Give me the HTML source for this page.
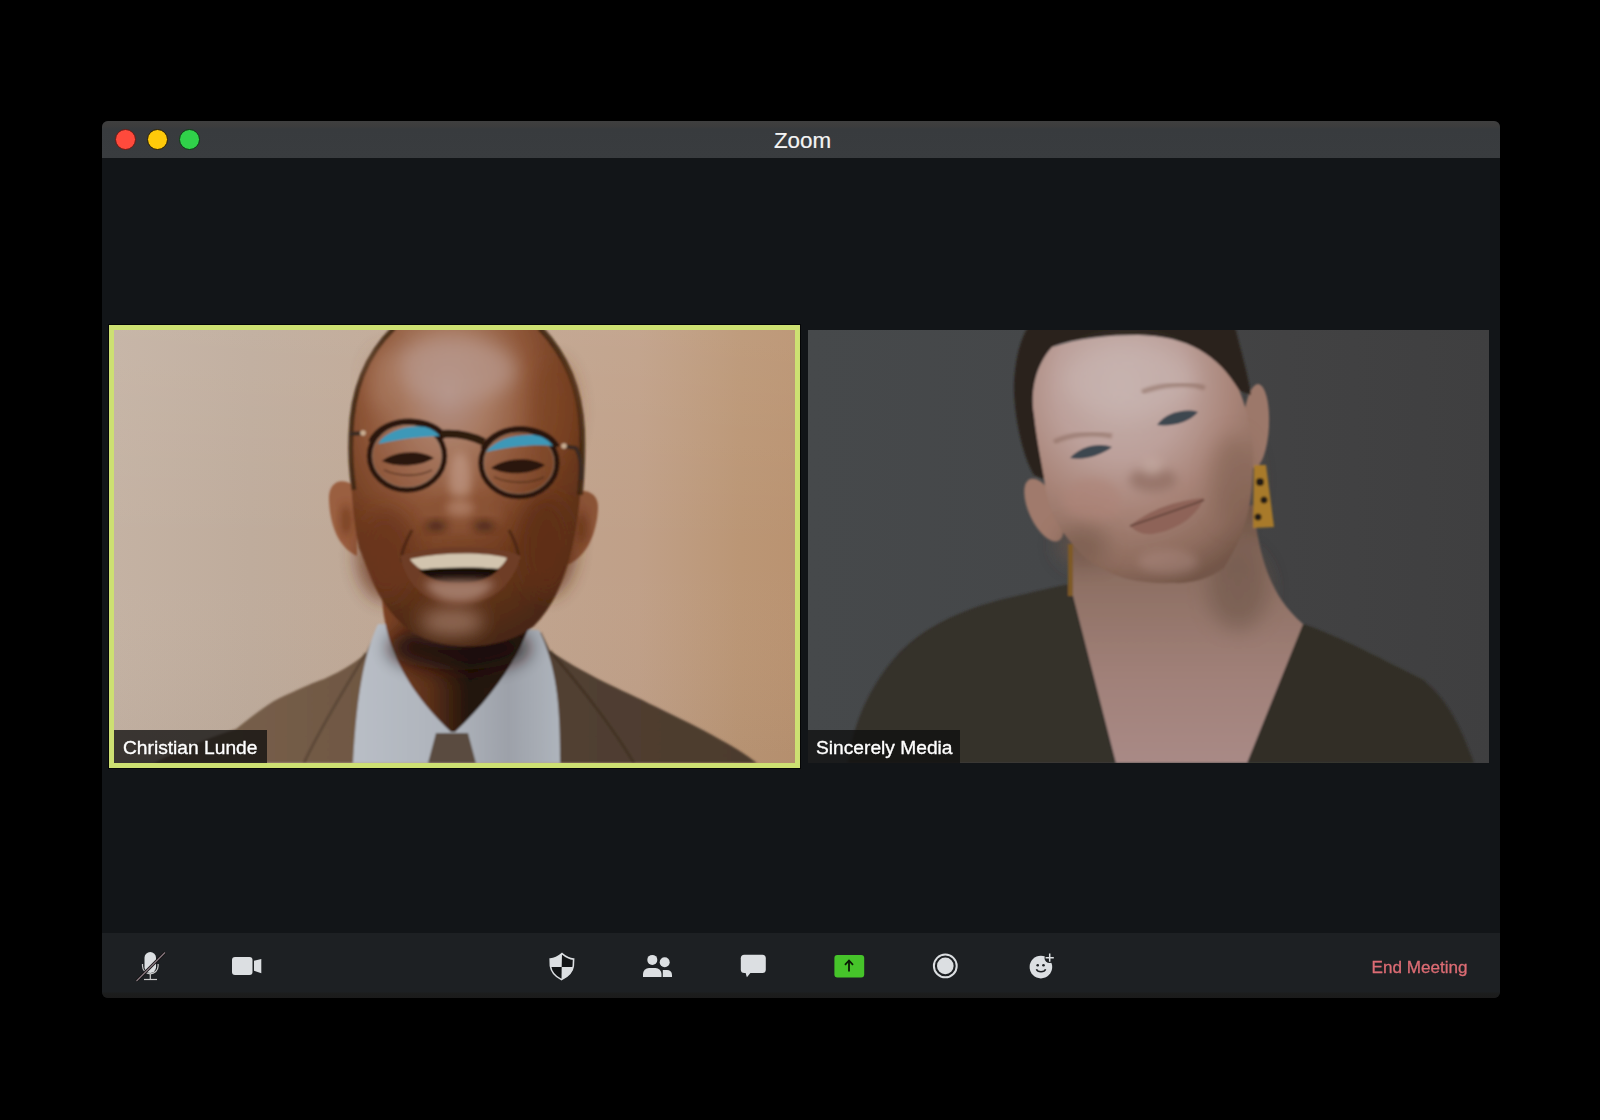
<!DOCTYPE html>
<html><head><meta charset="utf-8">
<style>
html,body{margin:0;padding:0;}
body{width:1600px;height:1120px;background:#000;position:relative;overflow:hidden;font-family:"Liberation Sans",sans-serif;}
.abs{position:absolute;}
#win{left:102px;top:121px;width:1398px;height:877px;background:#121518;border-radius:6px;overflow:hidden;}
#title{left:0;top:0;width:1398px;height:37px;background:linear-gradient(#3f3f3f 0px,#3d3d3d 5px,#383b3e 8px,#393c3f 100%);}
#title .t{left:1.5px;width:1398px;text-align:center;color:#f4f4f4;font-size:22.4px;line-height:36px;top:1.5px;-webkit-text-stroke:0.2px #f4f4f4;}
.dot{width:21px;height:21px;border-radius:50%;top:8px;box-sizing:border-box;}
#tb{left:0;top:812px;width:1398px;height:65px;background:linear-gradient(#1d2023 0px,#1d2023 59px,#1c1d1d 60px,#1b1b1b 100%);}
.lbl{background:rgba(14,14,14,0.76);color:#fff;font-size:19.2px;-webkit-text-stroke:0.35px #fff;height:33px;line-height:35px;}
#tile1b{left:109px;top:325px;width:691px;height:443px;box-sizing:border-box;border:5px solid #cde072;background:#000;outline:1px solid rgba(0,0,0,0.7);}
#tile1{left:114px;top:330px;width:681px;height:433px;overflow:hidden;}
#tile2{left:808px;top:330px;width:681px;height:433px;overflow:hidden;}
</style></head>
<body>
<div id="win" class="abs">
  <div id="title" class="abs">
    <div class="t abs">Zoom</div>
    <div class="dot abs" style="left:13px;background:#ff4a3c;border:1.5px solid #6a1a14;"></div>
    <div class="dot abs" style="left:45px;background:#ffca0a;border:1.5px solid #2a1e04;"></div>
    <div class="dot abs" style="left:77px;background:#30d24a;border:1.5px solid #0e3a14;"></div>
  </div>
  <div id="tb" class="abs"></div>
</div>
<div id="tile1b" class="abs"></div>
<div id="tile1" class="abs"><svg width="681" height="433" viewBox="0 0 681 433">
<defs>
<filter id="b1" x="-20%" y="-20%" width="140%" height="140%"><feGaussianBlur stdDeviation="1.3"/></filter>
<filter id="b2" x="-50%" y="-50%" width="200%" height="200%"><feGaussianBlur stdDeviation="4"/></filter>
<filter id="b4" x="-50%" y="-50%" width="200%" height="200%"><feGaussianBlur stdDeviation="9"/></filter>
<filter id="b3" x="-50%" y="-50%" width="200%" height="200%"><feGaussianBlur stdDeviation="18"/></filter>
<linearGradient id="bg1" x1="0" y1="0" x2="1" y2="0">
<stop offset="0" stop-color="#c4b2a3"/><stop offset="0.2" stop-color="#bfac9c"/><stop offset="0.5" stop-color="#c0a692"/><stop offset="0.77" stop-color="#c0a088"/><stop offset="0.92" stop-color="#bb9675"/><stop offset="1" stop-color="#ba9371"/>
</linearGradient>
<linearGradient id="bgv" x1="0" y1="0" x2="0" y2="1">
<stop offset="0" stop-color="#ffffff" stop-opacity="0.06"/><stop offset="0.5" stop-color="#ffffff" stop-opacity="0"/><stop offset="1" stop-color="#000000" stop-opacity="0.03"/>
</linearGradient>
<radialGradient id="head1" cx="0.42" cy="0.2" r="0.8">
<stop offset="0" stop-color="#b3938a"/><stop offset="0.22" stop-color="#a87a62"/><stop offset="0.45" stop-color="#8e5638"/><stop offset="0.7" stop-color="#6e3a1e"/><stop offset="1" stop-color="#4a2814"/>
</radialGradient>
<linearGradient id="neck1" x1="0" y1="0" x2="1" y2="0">
<stop offset="0" stop-color="#7e4426"/><stop offset="0.3" stop-color="#5a3019"/><stop offset="0.55" stop-color="#22140a"/><stop offset="1" stop-color="#2e1c10"/>
</linearGradient>
<linearGradient id="shirt1" x1="0" y1="0" x2="1" y2="0">
<stop offset="0" stop-color="#b9bec6"/><stop offset="0.5" stop-color="#adb2ba"/><stop offset="0.75" stop-color="#9da1a9"/><stop offset="1" stop-color="#aeb4bc"/>
</linearGradient>
<linearGradient id="jack1" x1="0" y1="0" x2="1" y2="0">
<stop offset="0" stop-color="#7a624e"/><stop offset="0.35" stop-color="#705843"/><stop offset="0.65" stop-color="#524032"/><stop offset="1" stop-color="#4c3b2d"/>
</linearGradient>
</defs>
<rect width="681" height="433" fill="url(#bg1)"/>
<rect width="681" height="433" fill="url(#bgv)"/>
<g filter="url(#b1)">
<!-- jacket -->
<path d="M40 433 C70 418 100 406 122 399 C140 385 155 372 172 365 C190 357 200 352 210 349 C230 340 245 330 252 323 L264 296 L300 360 L338 402 L380 360 L427 302 L436 321 C480 350 520 365 536 374 C580 395 620 415 643 433 Z" fill="url(#jack1)"/>
<path d="M252 323 C230 360 205 400 190 433" stroke="#4e3c2e" stroke-width="3" fill="none" opacity="0.6"/>
<path d="M436 321 C470 360 500 400 520 433" stroke="#3a2c20" stroke-width="3" fill="none" opacity="0.6"/>
<!-- shirt -->
<path d="M264 294 C252 320 243 357 239 433 L446 433 C446 380 444 340 425 300 Z" fill="url(#shirt1)"/>
<!-- neck -->
<path d="M268 250 C266 300 282 350 337 402 L341 402 C396 350 420 300 427 250 Z" fill="url(#neck1)"/>
<ellipse cx="345" cy="318" rx="70" ry="22" fill="#1a0f08" opacity="0.85" filter="url(#b4)"/>
<!-- tie -->
<path d="M322 403 L354 403 L362 433 L314 433 Z" fill="#5a4c40"/>
<!-- ears -->
<path d="M243 158 C230 146 214 150 215 170 C216 195 224 217 243 226 Z" fill="#9a5e40"/>
<path d="M450 166 C466 156 485 160 484 178 C483 205 471 230 450 236 Z" fill="#8a5236"/>
<ellipse cx="232" cy="190" rx="5" ry="16" fill="#6a3418" opacity="0.7" filter="url(#b2)"/>
<ellipse cx="468" cy="198" rx="5" ry="16" fill="#5e2e14" opacity="0.7" filter="url(#b2)"/>
<!-- head -->
<path d="M280 -2 L426 -2 C452 25 466 60 468 100 C470 140 466 190 455 230 C448 255 438 278 420 296 C400 312 370 318 344 316 C318 314 298 305 286 292 C272 278 262 262 256 245 C250 230 247 222 245 218 C238 185 236 150 237 105 C238 60 252 25 280 -2 Z" fill="url(#head1)"/>
<path d="M280 -2 C252 25 238 60 237 105 C236 125 237 140 240 160" stroke="#3c2410" stroke-width="5" fill="none" opacity="0.85"/>
<path d="M426 -2 C452 25 466 60 468 100 C469 125 468 140 466 165" stroke="#3c2410" stroke-width="6" fill="none" opacity="0.85"/>
<ellipse cx="340" cy="40" rx="62" ry="32" fill="#b8988c" opacity="0.7" filter="url(#b4)"/>
<ellipse cx="272" cy="50" rx="18" ry="30" fill="#aa7a60" opacity="0.6" filter="url(#b4)"/>
<ellipse cx="272" cy="225" rx="28" ry="45" fill="#6a361c" opacity="0.8" filter="url(#b4)"/>
<ellipse cx="432" cy="215" rx="28" ry="50" fill="#5e2e16" opacity="0.85" filter="url(#b4)"/>
<ellipse cx="440" cy="80" rx="22" ry="50" fill="#7a4224" opacity="0.6" filter="url(#b4)"/>
<ellipse cx="338" cy="292" rx="32" ry="14" fill="#a8826e" opacity="0.7" filter="url(#b4)"/>
<!-- nose -->
<ellipse cx="346" cy="150" rx="11" ry="28" fill="#bf9682" opacity="0.75" filter="url(#b2)"/>
<path d="M305 185 C310 170 325 165 345 166 C365 166 382 170 388 185 C384 200 368 203 345 203 C322 203 308 200 305 185 Z" fill="#8a5234" opacity="0.8" filter="url(#b2)"/>
<ellipse cx="346" cy="178" rx="14" ry="9" fill="#b08068" opacity="0.8" filter="url(#b2)"/>
<ellipse cx="322" cy="196" rx="11" ry="5" fill="#2e1608" opacity="0.7" filter="url(#b2)"/>
<ellipse cx="370" cy="196" rx="11" ry="5" fill="#2e1608" opacity="0.7" filter="url(#b2)"/>
<path d="M298 200 C290 215 286 225 288 232" stroke="#3a1c0c" stroke-width="3" fill="none" opacity="0.6"/>
<path d="M395 200 C403 215 406 225 404 232" stroke="#3a1c0c" stroke-width="3" fill="none" opacity="0.6"/>
<!-- mouth -->
<path d="M286 226 C320 214 380 214 407 226 C397 258 377 274 343 274 C313 274 294 258 286 226 Z" fill="#6e3e26"/>
<path d="M296 229 C330 222 370 222 393 228 C387 240 375 247 345 248 C320 247 304 241 296 229 Z" fill="#d2c4ae"/>
<path d="M305 240 C330 237 362 237 385 239 C376 249 362 253 345 253 C328 253 314 249 305 240 Z" fill="#160a06"/>
<path d="M310 252 C330 249 360 249 381 252 C372 267 358 272 345 272 C330 272 318 267 310 252 Z" fill="#a07866" filter="url(#b2)"/>
<!-- glasses -->
<ellipse cx="293" cy="126" rx="37.5" ry="34" fill="#a87a62" fill-opacity="0.2" stroke="#2a1810" stroke-width="5.5"/>
<ellipse cx="405" cy="133" rx="38" ry="33.5" fill="#8e5638" fill-opacity="0.2" stroke="#2a1810" stroke-width="5.5"/>
<ellipse cx="293" cy="126" rx="34.5" ry="31" fill="none" stroke="#9a8070" stroke-width="1.1" opacity="0.6"/>
<ellipse cx="405" cy="133" rx="35" ry="30.5" fill="none" stroke="#9a8070" stroke-width="1.1" opacity="0.6"/>
<path d="M264 114 C272 101 292 95 312 97 C322 99 327 102 329 106 C315 106 290 108 264 114 Z" fill="#3e98b8"/>
<path d="M372 122 C382 109 400 104 420 105 C432 107 438 111 440 116 C420 114 395 117 372 122 Z" fill="#3e98b8"/>
<path d="M257 112 C263 98 280 91.5 296 91.5 C313 92 325 98 331 108" stroke="#2a1810" stroke-width="6" fill="none"/>
<path d="M369 119 C376 105 392 99 408 99 C425 100 438 107 443 117" stroke="#2a1810" stroke-width="6" fill="none"/>
<path d="M327 104 C340 103 356 105 370 112" stroke="#2e1a10" stroke-width="8" fill="none"/>
<path d="M250 103 L236 104 M449 116 L462 118 C466 125 468 135 467 150" stroke="#3a2a20" stroke-width="4" fill="none"/>
<circle cx="249" cy="103" r="2.8" fill="#c8ac90"/><circle cx="450" cy="116" r="2.8" fill="#c8ac90"/>
<path d="M268 131 C280 121 306 119 320 128 C306 137 282 138 268 131 Z" fill="#2a160c"/>
<path d="M377 138 C390 128 416 126 431 135 C418 145 392 146 377 138 Z" fill="#2a160c"/>
<path d="M270 140 C285 147 305 147 318 140" stroke="#4a2a18" stroke-width="1.8" fill="none" opacity="0.6"/>
<path d="M380 147 C395 154 418 154 430 147" stroke="#4a2a18" stroke-width="1.8" fill="none" opacity="0.6"/>
</g>
</svg></div>
<div id="tile2" class="abs"><svg width="681" height="433" viewBox="0 0 681 433">
<defs>
<filter id="c1" x="-20%" y="-20%" width="140%" height="140%"><feGaussianBlur stdDeviation="1.3"/></filter>
<filter id="c2" x="-50%" y="-50%" width="200%" height="200%"><feGaussianBlur stdDeviation="5"/></filter>
<filter id="c4" x="-50%" y="-50%" width="200%" height="200%"><feGaussianBlur stdDeviation="10"/></filter>
<linearGradient id="bg2" x1="0" y1="0" x2="1" y2="0">
<stop offset="0" stop-color="#46494b"/><stop offset="0.35" stop-color="#454749"/><stop offset="0.7" stop-color="#424243"/><stop offset="1" stop-color="#3f3f40"/>
</linearGradient>
<radialGradient id="face2" cx="0.4" cy="0.2" r="0.85">
<stop offset="0" stop-color="#c6b2ae"/><stop offset="0.35" stop-color="#bca09a"/><stop offset="0.6" stop-color="#a88478"/><stop offset="0.85" stop-color="#8e6c5e"/><stop offset="1" stop-color="#735648"/>
</radialGradient>
<linearGradient id="neck2" x1="0" y1="0" x2="0" y2="1">
<stop offset="0" stop-color="#6e5446"/><stop offset="0.3" stop-color="#8e7064"/><stop offset="0.65" stop-color="#a08078"/><stop offset="1" stop-color="#a98a86"/>
</linearGradient>
<linearGradient id="sw2" x1="0" y1="0" x2="1" y2="0">
<stop offset="0" stop-color="#38322a"/><stop offset="1" stop-color="#302b24"/>
</linearGradient>
</defs>
<rect width="681" height="433" fill="url(#bg2)"/>
<g filter="url(#c1)">
<!-- sweater -->
<path d="M40 433 C45 395 60 360 85 330 C110 300 150 280 200 268 C230 261 250 256 262 254 L308 433 Z" fill="#35302a"/>
<path d="M439 433 L495 294 C530 305 590 338 614 349 C640 370 652 395 666 433 Z" fill="#332e27"/>
<!-- neck/chest -->
<path d="M262 195 L445 175 C452 230 462 265 495 294 L439 433 L308 433 L262 254 C266 240 266 220 262 195 Z" fill="url(#neck2)"/>
<ellipse cx="430" cy="260" rx="30" ry="40" fill="#6e5648" opacity="0.6" filter="url(#c4)"/>
<!-- ears -->
<ellipse cx="236" cy="180" rx="15" ry="34" transform="rotate(-25 236 180)" fill="#a07a6c"/>
<ellipse cx="448" cy="96" rx="13" ry="42" transform="rotate(3 448 96)" fill="#9c786a"/>
<!-- hair -->
<path d="M220 -3 L427 -3 C434 25 440 45 443 65 L430 60 C410 25 380 6 330 5 C290 5 255 10 244 17 C228 35 222 60 226 85 C230 110 234 130 238 150 L226 145 C214 125 206 85 206 55 C207 30 212 10 220 -3 Z" fill="#2a231c"/>
<!-- face -->
<path d="M244 17 C270 8 300 5 330 5 C380 6 410 25 431 60 C440 80 446 110 445 138 C444 170 440 200 416 238 C400 250 380 254 365 253 C340 254 320 250 310 246 C290 238 275 228 268 218 C256 205 246 190 243 180 C238 165 236 150 236 148 C232 125 228 105 226 85 C222 60 228 35 244 17 Z" fill="url(#face2)"/>
<ellipse cx="320" cy="50" rx="65" ry="35" fill="#c8b4b0" opacity="0.6" filter="url(#c4)"/>
<ellipse cx="285" cy="170" rx="28" ry="22" fill="#ad8478" opacity="0.6" filter="url(#c2)"/>
<ellipse cx="360" cy="232" rx="30" ry="12" fill="#b89690" opacity="0.35" filter="url(#c2)"/>
<ellipse cx="275" cy="215" rx="25" ry="20" fill="#73594a" opacity="0.6" filter="url(#c4)"/>
<ellipse cx="425" cy="150" rx="22" ry="45" fill="#7e5e50" opacity="0.5" filter="url(#c4)"/>
<!-- brows -->
<path d="M246 112 C262 104 285 102 304 106" stroke="#8a6a5e" stroke-width="5" fill="none" opacity="0.55" filter="url(#c1)"/>
<path d="M334 62 C355 54 380 52 397 58" stroke="#8a6a5e" stroke-width="5" fill="none" opacity="0.55" filter="url(#c1)"/>
<!-- eyes -->
<path d="M262 128 C272 116 292 112 304 117 C294 125 276 131 262 128 Z" fill="#3e4650"/>
<path d="M349 95 C358 82 378 78 390 82 C382 92 364 97 349 95 Z" fill="#3e4650"/>
<!-- nose -->
<ellipse cx="345" cy="150" rx="24" ry="12" fill="#8e6c60" opacity="0.7" filter="url(#c2)"/>
<ellipse cx="344" cy="136" rx="11" ry="9" fill="#c4aaa2" opacity="0.7" filter="url(#c2)"/>
<!-- lips -->
<path d="M322 196 C340 180 370 170 396 168 C390 185 370 200 345 204 C335 205 328 202 322 196 Z" fill="#8e6458"/>
<path d="M322 196 C345 188 375 178 396 170" stroke="#5e4038" stroke-width="1.5" fill="none"/>
<!-- earrings -->
<path d="M446 135 L458 135 L466 197 L445 198 Z" fill="#a87a2c"/>
<circle cx="452" cy="152" r="4" fill="#221a12"/><circle cx="456" cy="170" r="3.5" fill="#221a12"/><circle cx="450" cy="187" r="3.5" fill="#221a12"/>
<rect x="260" y="214" width="5" height="52" fill="#7e5a26"/>
</g>
</svg></div>
<div class="lbl abs" style="left:114px;top:730px;width:153px;"><span style="position:absolute;left:9px;">Christian Lunde</span></div>
<div class="lbl abs" style="left:808px;top:730px;width:152px;"><span style="position:absolute;left:8px;">Sincerely Media</span></div>

<svg class="abs" style="left:0;top:0" width="1600" height="1120" viewBox="0 0 1600 1120">
  <g fill="#dcdfe2">
    <!-- mic -->
    <rect x="144.5" y="952" width="11.5" height="21" rx="5.75"/>
    <path d="M142.5 964 v2 a7.8 7.8 0 0 0 15.6 0 v-2" fill="none" stroke="#c8c8c8" stroke-width="1.2"/>
    <line x1="150.3" y1="974" x2="150.3" y2="979" stroke="#c8c8c8" stroke-width="1.2"/>
    <line x1="144" y1="979.5" x2="157" y2="979.5" stroke="#c8c8c8" stroke-width="1.2"/>
    <line x1="136.5" y1="981" x2="165" y2="952.5" stroke="#111" stroke-width="3"/>
    <line x1="136.5" y1="981" x2="165" y2="952.5" stroke="#8a7a80" stroke-width="1.3"/>
    <!-- camera -->
    <rect x="232" y="957" width="20.5" height="18" rx="3"/>
    <path d="M254 960.8 L261.3 958.9 L261.3 973.2 L254 970.8 Z"/>
    <!-- shield -->
    <path d="M562 953.6 C558 957 554 958.8 550.2 959.1 L550.4 966 C551.2 972 555 976.5 561.5 979.6 C568 976.5 572.6 972 573.3 966 L573.6 959.1 C569.5 958.8 566 957 562 953.6 Z" fill="#121416" stroke="#dcdfe2" stroke-width="1.6"/>
    <path d="M562 953.6 C558 957 554 958.8 550.2 959.1 L550.4 966.9 L561.7 966.9 Z"/>
    <path d="M561.7 966.9 L573.2 966.9 C572.5 972 568 976.5 561.5 979.6 Z"/>
    <!-- participants -->
    <circle cx="652.3" cy="959.9" r="5"/>
    <path d="M643 977.1 v-3 a6 6 0 0 1 6 -6 h6.5 a6 6 0 0 1 6 6 v3 Z"/>
    <circle cx="664.7" cy="962.3" r="5"/>
    <path d="M662.8 977.1 v-7.2 h4.2 a5 5 0 0 1 5 5 v2.2 Z"/>
    <!-- chat -->
    <rect x="740.8" y="954.8" width="25" height="18.3" rx="3.5"/>
    <path d="M745 971 L746.9 977.3 L752 971 Z"/>
    <!-- share -->
    <rect x="834.4" y="955" width="29.8" height="22.5" rx="3" fill="#46c42a"/>
    <path d="M849 961 v10.5" stroke="#0a1a05" stroke-width="1.8" fill="none"/>
    <path d="M845 964.8 L849 960.5 L853 964.8" stroke="#0a1a05" stroke-width="1.8" fill="none"/>
    <!-- record -->
    <circle cx="945.3" cy="965.9" r="11.4" fill="none" stroke="#dcdfe2" stroke-width="2"/>
    <circle cx="945.3" cy="965.9" r="8.3"/>
    <!-- reactions -->
    <circle cx="1040.9" cy="967.1" r="11.3"/>
    <circle cx="1049.7" cy="957.9" r="5.2" fill="#1d2023"/>
    <path d="M1049.7 953.6 v8.2 M1045.6 957.7 h8.2" stroke="#dcdfe2" stroke-width="1.5"/>
    <circle cx="1037.7" cy="965.3" r="1.3" fill="#1d2023"/>
    <circle cx="1043.5" cy="965.3" r="1.3" fill="#1d2023"/>
    <path d="M1036.4 969.3 C1037.5 972.5 1044.5 972.5 1045.6 969.3" fill="none" stroke="#1d2023" stroke-width="1.5"/>
  </g>
  <text x="1371.5" y="972.8" fill="#dc6c74" stroke="#dc6c74" stroke-width="0.3" font-size="17.1" font-family="Liberation Sans">End Meeting</text>
</svg>
</body></html>
